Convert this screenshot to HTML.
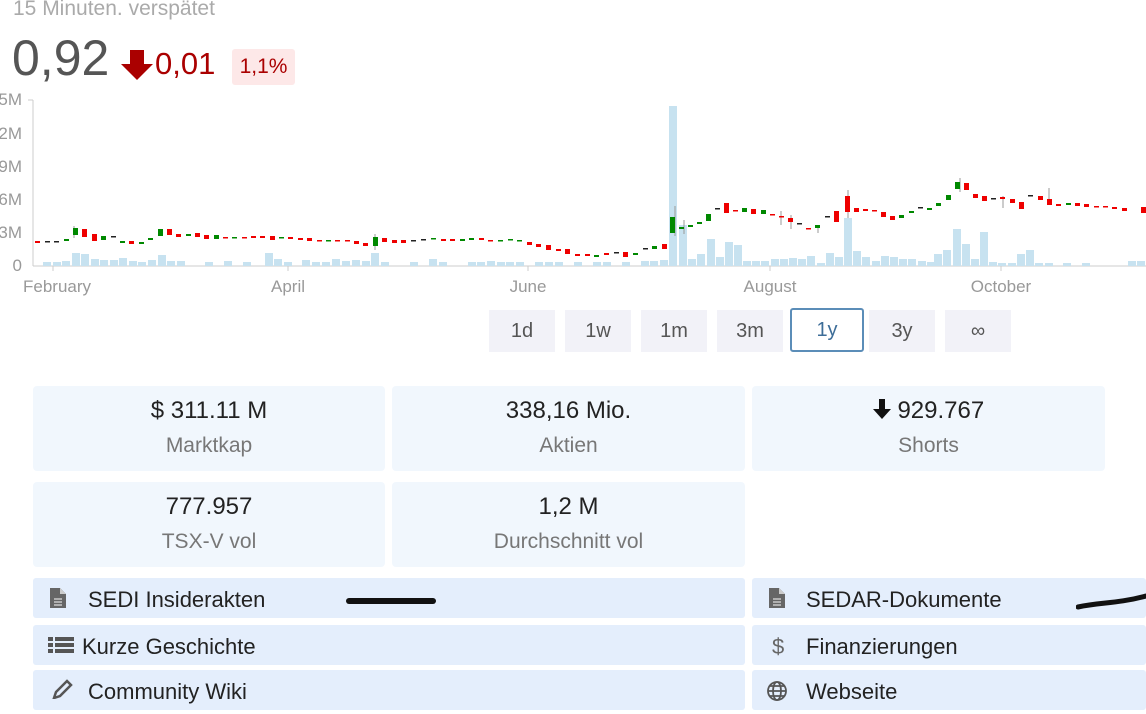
<!DOCTYPE html>
<html><head><meta charset="utf-8"><style>
body{margin:0;width:1146px;height:694px;overflow:hidden;background:#fff;font-family:"Liberation Sans",sans-serif;position:relative}
.a{position:absolute}
.btn{position:absolute;top:310px;width:66px;height:42px;background:#f2f2f8;color:#555;font-size:20px;line-height:42px;text-align:center}
.card{position:absolute;background:#f1f7fd;border-radius:4px;text-align:center}
.card .v{font-size:24px;color:#222;margin-top:10px;line-height:30px}
.card .l{font-size:21px;color:#777;line-height:28px;margin-top:6px}
.lk{position:absolute;background:#e4eefc;border-radius:3px;font-size:22px;color:#222;line-height:44px;height:40px}
</style></head><body>
<div class="a" style="left:13px;top:-3px;font-size:21px;color:#aaa">15 Minuten. verspätet</div>
<div class="a" style="left:12px;top:28px;font-size:50px;color:#555;line-height:60px">0,92</div>
<svg class="a" style="left:120px;top:50px" width="34" height="30" viewBox="0 0 34 30"><path d="M10 0h14v14h9L17 30 1 14h9z" fill="#a00"/></svg>
<div class="a" style="left:155px;top:44px;font-size:31px;color:#a00;line-height:40px">0,01</div>
<div class="a" style="left:232px;top:49px;width:63px;height:36px;background:#fde8e8;border-radius:3px;color:#a00;font-size:21px;line-height:36px;text-align:center">1,1%</div>
<svg class="a" style="left:0;top:88px" width="1146" height="212" viewBox="0 88 1146 212">
<g font-family="Liberation Sans" font-size="17" fill="#999" text-anchor="end">
<text x="22" y="105">5M</text><text x="22" y="139">2M</text><text x="22" y="172">9M</text><text x="22" y="205">6M</text><text x="22" y="238">3M</text><text x="22" y="271">0</text>
</g>
<g stroke="#ccc"><line x1="33" y1="100" x2="33" y2="266"/><line x1="28" y1="100" x2="33" y2="100"/><line x1="33" y1="266" x2="1146" y2="266"/>
<line x1="53" y1="266" x2="53" y2="271"/><line x1="288" y1="266" x2="288" y2="271"/><line x1="528" y1="266" x2="528" y2="271"/><line x1="770" y1="266" x2="770" y2="271"/><line x1="1001" y1="266" x2="1001" y2="271"/></g>
<g fill="#c7e2f0">
<rect x="43" y="262" width="8" height="4"/><rect x="53" y="262" width="8" height="4"/><rect x="62" y="261" width="8" height="5"/><rect x="72" y="253" width="8" height="13"/><rect x="81" y="254" width="8" height="12"/><rect x="91" y="259" width="8" height="7"/><rect x="100" y="260" width="8" height="6"/><rect x="110" y="260" width="8" height="6"/><rect x="119" y="258" width="8" height="8"/><rect x="129" y="261" width="8" height="5"/><rect x="138" y="262" width="8" height="4"/><rect x="148" y="260" width="8" height="6"/><rect x="158" y="255" width="8" height="11"/><rect x="167" y="261" width="8" height="5"/><rect x="177" y="261" width="8" height="5"/><rect x="205" y="262" width="8" height="4"/><rect x="224" y="261" width="8" height="5"/><rect x="243" y="262" width="8" height="4"/><rect x="265" y="253" width="8" height="13"/><rect x="274" y="259" width="8" height="7"/><rect x="284" y="262" width="8" height="4"/><rect x="302" y="260" width="8" height="6"/><rect x="312" y="262" width="8" height="4"/><rect x="322" y="262" width="8" height="4"/><rect x="332" y="259" width="8" height="7"/><rect x="342" y="261" width="8" height="5"/><rect x="352" y="260" width="8" height="6"/><rect x="362" y="261" width="8" height="5"/><rect x="371" y="253" width="8" height="13"/><rect x="381" y="262" width="8" height="4"/><rect x="410" y="262" width="8" height="4"/><rect x="429" y="259" width="8" height="7"/><rect x="439" y="262" width="8" height="4"/><rect x="468" y="262" width="8" height="4"/><rect x="477" y="262" width="8" height="4"/><rect x="487" y="261" width="8" height="5"/><rect x="497" y="262" width="8" height="4"/><rect x="506" y="262" width="8" height="4"/><rect x="516" y="262" width="8" height="4"/><rect x="535" y="262" width="8" height="4"/><rect x="545" y="262" width="8" height="4"/><rect x="555" y="262" width="8" height="4"/><rect x="574" y="262" width="8" height="4"/><rect x="593" y="262" width="8" height="4"/><rect x="603" y="262" width="8" height="4"/><rect x="622" y="262" width="8" height="4"/><rect x="641" y="261" width="8" height="5"/><rect x="650" y="261" width="8" height="5"/><rect x="660" y="260" width="8" height="6"/>
<rect x="669" y="106" width="8" height="160"/><rect x="679" y="225" width="8" height="41"/><rect x="688" y="259" width="8" height="7"/><rect x="697" y="254" width="8" height="12"/><rect x="707" y="239" width="8" height="27"/><rect x="716" y="257" width="8" height="9"/><rect x="725" y="242" width="8" height="24"/><rect x="734" y="245" width="8" height="21"/><rect x="743" y="261" width="8" height="5"/><rect x="752" y="261" width="8" height="5"/><rect x="761" y="261" width="8" height="5"/><rect x="771" y="259" width="8" height="7"/><rect x="780" y="259" width="8" height="7"/><rect x="789" y="258" width="8" height="8"/><rect x="798" y="259" width="8" height="7"/><rect x="807" y="256" width="8" height="10"/><rect x="817" y="263" width="8" height="3"/><rect x="826" y="253" width="8" height="13"/><rect x="835" y="257" width="8" height="9"/><rect x="844" y="218" width="8" height="48"/><rect x="853" y="251" width="8" height="15"/><rect x="862" y="257" width="8" height="9"/><rect x="872" y="261" width="8" height="5"/><rect x="881" y="256" width="8" height="10"/><rect x="890" y="257" width="8" height="9"/><rect x="899" y="259" width="8" height="7"/><rect x="908" y="259" width="8" height="7"/><rect x="918" y="261" width="8" height="5"/><rect x="927" y="262" width="8" height="4"/><rect x="934" y="254" width="8" height="12"/><rect x="943" y="250" width="8" height="16"/><rect x="953" y="229" width="8" height="37"/><rect x="962" y="244" width="8" height="22"/><rect x="971" y="259" width="8" height="7"/><rect x="980" y="232" width="8" height="34"/><rect x="989" y="262" width="8" height="4"/><rect x="998" y="263" width="8" height="3"/><rect x="1008" y="263" width="8" height="3"/><rect x="1017" y="254" width="8" height="12"/><rect x="1026" y="250" width="8" height="16"/><rect x="1035" y="263" width="8" height="3"/><rect x="1045" y="263" width="8" height="3"/><rect x="1063" y="263" width="8" height="3"/><rect x="1082" y="263" width="8" height="3"/><rect x="1128" y="261" width="8" height="5"/><rect x="1137" y="261" width="8" height="5"/>
</g>
<g stroke="#999" stroke-width="1">
<line x1="675" y1="206" x2="675" y2="236"/><line x1="684" y1="220" x2="684" y2="234"/><line x1="848" y1="190" x2="848" y2="218"/><line x1="960" y1="178" x2="960" y2="192"/><line x1="1049" y1="188" x2="1049" y2="200"/><line x1="781" y1="211" x2="781" y2="225"/><line x1="791" y1="215" x2="791" y2="229"/><line x1="818" y1="225" x2="818" y2="233"/><line x1="375" y1="234" x2="375" y2="250"/><line x1="74" y1="226" x2="74" y2="238"/><line x1="1003" y1="196" x2="1003" y2="208"/>
</g>
<g>
<rect x="35" y="241" width="5" height="2" fill="#e00"/><rect x="45" y="241" width="5" height="1.5" fill="#222"/><rect x="54" y="241" width="5" height="1.5" fill="#222"/><rect x="64" y="239" width="5" height="2" fill="#080"/><rect x="73" y="228" width="5" height="7" fill="#080"/><rect x="82" y="229" width="5" height="8" fill="#e00"/><rect x="92" y="234" width="5" height="7" fill="#e00"/><rect x="101" y="236" width="5" height="4" fill="#080"/><rect x="111" y="236" width="5" height="1.5" fill="#222"/><rect x="120" y="241" width="5" height="2" fill="#080"/><rect x="129" y="241" width="5" height="3" fill="#e00"/><rect x="139" y="242" width="5" height="2" fill="#080"/><rect x="148" y="238" width="5" height="2" fill="#080"/><rect x="158" y="229" width="5" height="7" fill="#080"/><rect x="167" y="229" width="5" height="6" fill="#e00"/><rect x="176" y="234" width="5" height="3" fill="#e00"/><rect x="186" y="234" width="5" height="2" fill="#080"/><rect x="195" y="233" width="5" height="4" fill="#e00"/><rect x="204" y="235" width="5" height="4" fill="#e00"/><rect x="214" y="235" width="5" height="4" fill="#080"/><rect x="223" y="237" width="5" height="1.5" fill="#e00"/><rect x="232" y="237" width="5" height="1.5" fill="#080"/><rect x="242" y="237" width="5" height="1.5" fill="#e00"/><rect x="251" y="236" width="5" height="2" fill="#e00"/><rect x="260" y="236" width="5" height="2" fill="#e00"/><rect x="270" y="236" width="5" height="4" fill="#e00"/><rect x="279" y="237" width="5" height="1.5" fill="#080"/><rect x="288" y="237" width="5" height="2" fill="#e00"/><rect x="298" y="238" width="5" height="2" fill="#e00"/><rect x="307" y="238" width="5" height="3" fill="#e00"/><rect x="317" y="240" width="5" height="1.5" fill="#e00"/><rect x="326" y="240" width="5" height="1.5" fill="#080"/><rect x="335" y="240" width="5" height="1.5" fill="#e00"/><rect x="345" y="240" width="5" height="1.5" fill="#e00"/><rect x="354" y="241" width="5" height="3" fill="#e00"/><rect x="363" y="243" width="5" height="3" fill="#e00"/><rect x="373" y="237" width="5" height="9" fill="#080"/><rect x="382" y="238" width="5" height="4" fill="#e00"/><rect x="392" y="240" width="5" height="3" fill="#e00"/><rect x="401" y="240" width="5" height="3" fill="#e00"/><rect x="411" y="240" width="5" height="1.5" fill="#222"/><rect x="421" y="239" width="5" height="1.5" fill="#222"/><rect x="431" y="238" width="5" height="1.5" fill="#080"/><rect x="441" y="239" width="5" height="2" fill="#e00"/><rect x="450" y="239" width="5" height="2" fill="#e00"/><rect x="460" y="239" width="5" height="2" fill="#080"/><rect x="469" y="238" width="5" height="2" fill="#080"/><rect x="479" y="238" width="5" height="2" fill="#e00"/><rect x="488" y="240" width="5" height="1.5" fill="#e00"/><rect x="498" y="240" width="5" height="1.5" fill="#080"/><rect x="508" y="239" width="5" height="1.5" fill="#080"/><rect x="517" y="240" width="5" height="1.5" fill="#080"/><rect x="527" y="242" width="5" height="3" fill="#e00"/><rect x="536" y="244" width="5" height="3" fill="#e00"/><rect x="546" y="245" width="5" height="5" fill="#e00"/><rect x="556" y="249" width="5" height="2" fill="#e00"/><rect x="565" y="249" width="5" height="5" fill="#e00"/><rect x="575" y="254" width="5" height="2" fill="#e00"/><rect x="585" y="254" width="5" height="2" fill="#e00"/><rect x="594" y="255" width="5" height="2" fill="#080"/><rect x="604" y="253" width="5" height="2" fill="#e00"/><rect x="614" y="252" width="5" height="1.5" fill="#222"/><rect x="623" y="252" width="5" height="5" fill="#e00"/><rect x="633" y="253" width="5" height="2" fill="#080"/><rect x="643" y="248" width="5" height="1.5" fill="#222"/><rect x="652" y="246" width="5" height="3" fill="#080"/><rect x="662" y="244" width="5" height="5" fill="#e00"/>
<rect x="670" y="217" width="5" height="16" fill="#080"/><rect x="679" y="227" width="5" height="2" fill="#080"/><rect x="688" y="225" width="5" height="2" fill="#080"/><rect x="697" y="222" width="5" height="2" fill="#080"/><rect x="706" y="214" width="5" height="7" fill="#080"/><rect x="715" y="208" width="5" height="1.5" fill="#222"/><rect x="724" y="203" width="5" height="10" fill="#e00"/><rect x="733" y="210" width="5" height="1.5" fill="#e00"/><rect x="742" y="208" width="5" height="4" fill="#080"/><rect x="751" y="209" width="5" height="5" fill="#e00"/><rect x="761" y="210" width="5" height="4" fill="#080"/><rect x="770" y="214" width="5" height="1.5" fill="#e00"/><rect x="779" y="216" width="5" height="1.5" fill="#e00"/><rect x="788" y="218" width="5" height="4" fill="#e00"/><rect x="797" y="223" width="5" height="1.5" fill="#222"/><rect x="806" y="228" width="5" height="1.5" fill="#e00"/><rect x="815" y="225" width="5" height="3" fill="#080"/><rect x="825" y="216" width="5" height="1.5" fill="#222"/><rect x="834" y="211" width="5" height="11" fill="#e00"/><rect x="845" y="196" width="5" height="16" fill="#e00"/><rect x="854" y="208" width="5" height="4" fill="#e00"/><rect x="863" y="209" width="5" height="2" fill="#e00"/><rect x="872" y="210" width="5" height="1.5" fill="#e00"/><rect x="881" y="212" width="5" height="5" fill="#e00"/><rect x="890" y="216" width="5" height="4" fill="#e00"/><rect x="899" y="215" width="5" height="3" fill="#080"/><rect x="909" y="211" width="5" height="2" fill="#080"/><rect x="918" y="207" width="5" height="1.5" fill="#222"/><rect x="927" y="208" width="5" height="2" fill="#080"/><rect x="936" y="203" width="5" height="3" fill="#080"/><rect x="946" y="195" width="5" height="5" fill="#080"/><rect x="955" y="182" width="5" height="7" fill="#080"/><rect x="964" y="183" width="5" height="7" fill="#e00"/><rect x="973" y="194" width="5" height="4" fill="#e00"/><rect x="982" y="196" width="5" height="5" fill="#e00"/><rect x="991" y="198" width="5" height="1.5" fill="#222"/><rect x="1000" y="197" width="5" height="2" fill="#e00"/><rect x="1010" y="199" width="5" height="4" fill="#e00"/><rect x="1019" y="202" width="5" height="7" fill="#e00"/><rect x="1028" y="195" width="5" height="1.5" fill="#222"/><rect x="1038" y="196" width="5" height="4" fill="#e00"/><rect x="1047" y="199" width="5" height="6" fill="#e00"/><rect x="1056" y="204" width="5" height="2" fill="#e00"/><rect x="1066" y="203" width="5" height="2" fill="#080"/><rect x="1075" y="203" width="5" height="3" fill="#e00"/><rect x="1084" y="204" width="5" height="3" fill="#e00"/><rect x="1094" y="206" width="5" height="1.5" fill="#e00"/><rect x="1103" y="206" width="5" height="1.5" fill="#e00"/><rect x="1112" y="207" width="5" height="2" fill="#e00"/><rect x="1122" y="208" width="5" height="3" fill="#e00"/><rect x="1141" y="207" width="5" height="6" fill="#e00"/>
</g>
<g font-family="Liberation Sans" font-size="17" fill="#999" text-anchor="middle">
<text x="57" y="292">February</text><text x="288" y="292">April</text><text x="528" y="292">June</text><text x="770" y="292">August</text><text x="1001" y="292">October</text>
</g>
</svg>
<div class="btn" style="left:489px">1d</div><div class="btn" style="left:565px">1w</div><div class="btn" style="left:641px">1m</div><div class="btn" style="left:717px">3m</div>
<div class="btn" style="left:790px;width:70px;height:40px;line-height:40px;top:308px;background:#fff;border:2px solid #5b8db8;border-radius:3px;color:#3d6d98">1y</div>
<div class="btn" style="left:869px">3y</div><div class="btn" style="left:945px">∞</div>
<div class="card" style="left:33px;top:386px;width:352px;height:85px"><div class="v">$ 311.11 M</div><div class="l">Marktkap</div></div>
<div class="card" style="left:392px;top:386px;width:353px;height:85px"><div class="v">338,16 Mio.</div><div class="l">Aktien</div></div>
<div class="card" style="left:752px;top:386px;width:353px;height:85px"><div class="v"><svg width="18" height="20" viewBox="0 0 18 20" style="vertical-align:-1px"><path d="M6 0h6v10h6L9 20 0 10h6z" fill="#111"/></svg> 929.767</div><div class="l">Shorts</div></div>
<div class="card" style="left:33px;top:482px;width:352px;height:85px"><div class="v">777.957</div><div class="l">TSX-V vol</div></div>
<div class="card" style="left:392px;top:482px;width:353px;height:85px"><div class="v">1,2 M</div><div class="l">Durchschnitt vol</div></div>
<div class="lk" style="left:33px;top:578px;width:712px"><svg class="a" style="left:17px;top:10px" width="16" height="20"><path d="M0 0h10l6 6v14H0z" fill="#666"/><path d="M10 0v6h6" fill="#ccc"/><path d="M4 11h8M4 14h8M4 17h8" stroke="#ddd" stroke-width="1.3"/></svg><span class="a" style="left:55px">SEDI Insiderakten</span><div class="a" style="left:313px;top:20px;width:90px;height:6px;background:#111;border-radius:3px"></div></div>
<div class="lk" style="left:752px;top:578px;width:394px"><svg class="a" style="left:17px;top:10px" width="16" height="20"><path d="M0 0h10l6 6v14H0z" fill="#666"/><path d="M10 0v6h6" fill="#ccc"/><path d="M4 11h8M4 14h8M4 17h8" stroke="#ddd" stroke-width="1.3"/></svg><span class="a" style="left:54px">SEDAR-Dokumente</span><svg class="a" style="left:324px;top:14px" width="70" height="20"><path d="M2 15C25 10 40 12 70 4" stroke="#111" stroke-width="5" fill="none" stroke-linecap="round"/></svg></div>
<div class="lk" style="left:33px;top:625px;width:712px"><svg class="a" style="left:15px;top:12px" width="26" height="17"><g fill="#555"><rect x="0" y="0" width="5" height="4"/><rect x="7" y="0" width="19" height="4"/><rect x="0" y="6" width="5" height="4"/><rect x="7" y="6" width="19" height="4"/><rect x="0" y="12" width="5" height="4"/><rect x="7" y="12" width="19" height="4"/></g></svg><span class="a" style="left:49px">Kurze Geschichte</span></div>
<div class="lk" style="left:752px;top:625px;width:394px"><span class="a" style="left:20px;color:#666">$</span><span class="a" style="left:54px">Finanzierungen</span></div>
<div class="lk" style="left:33px;top:670px;width:712px"><svg class="a" style="left:18px;top:9px" width="22" height="20"><path d="M3 19l2-6L16 2l4 4L9 17z" fill="none" stroke="#555" stroke-width="2.5"/></svg><span class="a" style="left:55px;top:0">Community Wiki</span></div>
<div class="lk" style="left:752px;top:670px;width:394px"><svg class="a" style="left:14px;top:10px" width="22" height="22"><g fill="none" stroke="#555" stroke-width="1.8"><circle cx="11" cy="11" r="9"/><ellipse cx="11" cy="11" rx="4" ry="9"/><path d="M2 11h18M4 6h14M4 16h14"/></g></svg><span class="a" style="left:54px;top:0">Webseite</span></div>
</body></html>
